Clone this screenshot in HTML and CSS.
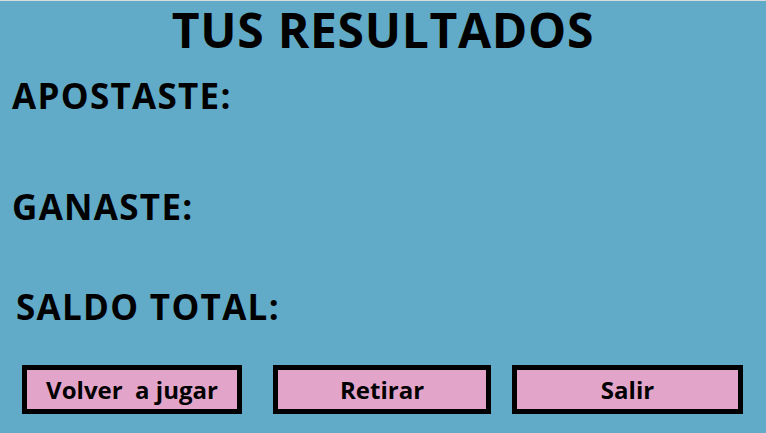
FILE: index.html
```html
<!DOCTYPE html>
<html lang="es">
<head>
<meta charset="utf-8">
<title>Tus resultados</title>
<link rel="stylesheet" href="styles.css">
</head>
<body>
<main class="screen">
  <h1 class="title">TUS RESULTADOS</h1>
  <p class="label label-apostaste">APOSTASTE:</p>
  <p class="label label-ganaste">GANASTE:</p>
  <p class="label label-saldo">SALDO TOTAL:</p>
  <div class="actions">
    <button class="btn btn-volver">Volver&nbsp; a jugar</button>
    <button class="btn btn-retirar">Retirar</button>
    <button class="btn btn-salir">Salir</button>
  </div>
</main>
</body>
</html>
```
FILE: styles.css
```css
html, body {
  margin: 0;
  padding: 0;
  width: 766px;
  height: 433px;
  overflow: hidden;
  background: #61abc9;
}
.screen {
  box-sizing: border-box;
  width: 766px;
  height: 433px;
  background: #61abc9;
  border-top: 1px solid #d9dcdc;
  display: flex;
  flex-direction: column;
  font-family: "Open Sans", "Noto Sans", sans-serif;
  font-weight: 700;
  color: #000;
}
.title {
  margin: 1px 0 0 0;
  font-size: 48px;
  line-height: 56px;
  font-weight: 700;
  letter-spacing: 0.7px;
  text-align: center;
}
.label {
  margin: 0;
  padding-left: 12px;
  font-size: 35px;
  line-height: 35px;
  letter-spacing: 1.3px;
}
.label-apostaste { margin-top: 20px; }
.label-ganaste { margin-top: 76px; }
.label-saldo { margin-top: 65px; padding-left: 16px; }
.actions {
  display: flex;
  margin-top: 41px;
  padding-left: 22px;
}
.btn {
  box-sizing: border-box;
  height: 49px;
  border: 5px solid #000;
  background: #e2a5c9;
  font-family: "Open Sans", "Noto Sans", sans-serif;
  font-weight: 700;
  font-size: 24px;
  color: #000;
  padding: 0;
  display: flex;
  align-items: center;
  justify-content: center;
}
.btn-volver { width: 220px; margin-right: 31px; }
.btn-retirar { width: 218px; margin-right: 21px; }
.btn-salir { width: 231px; }
```
